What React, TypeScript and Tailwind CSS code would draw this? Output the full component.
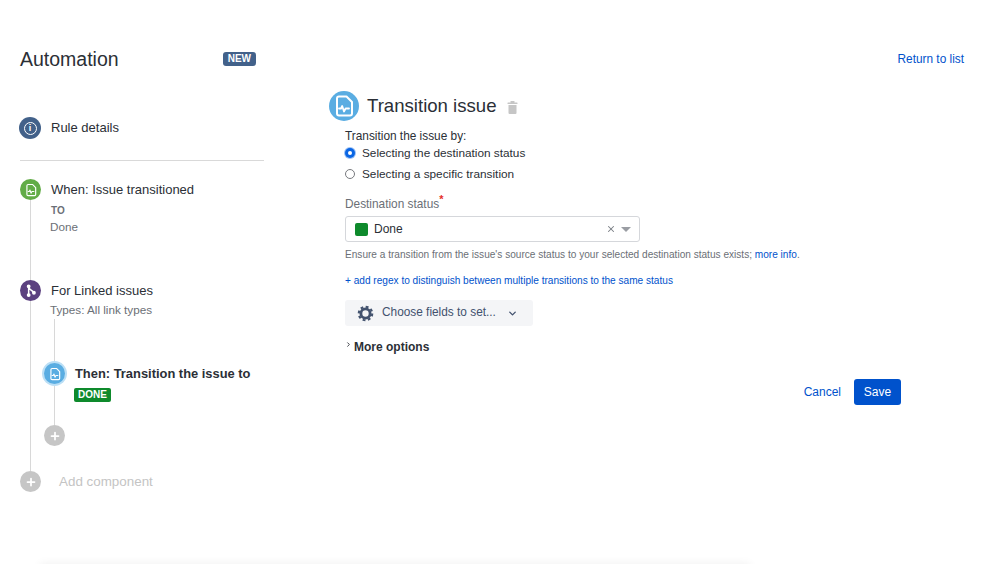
import { ChevronDown, ChevronRight, Plus, X } from 'lucide-react'

function IssueGlyph({ size = 14 }: { size?: number }) {
  return (
    <svg width={size} height={size} viewBox="0 0 24 24" fill="none" stroke="white" strokeWidth="2" strokeLinejoin="round" strokeLinecap="round">
      <path d="M7 2.5h7.5L20 8v11.5a2 2 0 0 1-2 2H7a2 2 0 0 1-2-2v-15a2 2 0 0 1 2-2z" />
      <path d="M7 14.5h2l1.2-2.5 1.8 5.5 1.6-3H17" strokeWidth="1.8" />
    </svg>
  )
}

function StepIcon({ className, children }: { className: string; children: React.ReactNode }) {
  return <div className={`z-10 flex shrink-0 items-center justify-center rounded-full ${className}`}>{children}</div>
}

function AddDot() {
  return (
    <StepIcon className="h-[21px] w-[21px] bg-[#c6c6c6]">
      <Plus size={12} color="white" strokeWidth={3.5} />
    </StepIcon>
  )
}

function GearIcon() {
  return (
    <svg width="17" height="17" viewBox="0 0 24 24" fill="none" stroke="#42526e">
      <circle cx="12" cy="12" r="6.5" strokeWidth="4" />
      <circle cx="12" cy="12" r="9.5" strokeWidth="3" strokeDasharray="4 3.46" />
    </svg>
  )
}

function TrashIcon() {
  return (
    <svg width="11" height="13" viewBox="0 0 11 13" fill="#c6c6c6">
      <rect x="0.5" y="1.5" width="10" height="1.5" rx="0.5" />
      <rect x="3.5" y="0" width="4" height="2" rx="0.5" />
      <path d="M1.5 4h8v8a1 1 0 0 1-1 1h-6a1 1 0 0 1-1-1z" />
    </svg>
  )
}

function Sidebar() {
  return (
    <aside className="relative ml-[20px] w-[244px] shrink-0 pt-[47px]">
      <span className="absolute left-[10px] top-[200px] z-0 h-[271px] w-px bg-[#d8d8d8]" />
      <span className="absolute left-[34px] top-[319px] z-0 h-[106px] w-px bg-[#d8d8d8]" />
      <div className="flex items-center justify-between pr-[8px]">
        <h1 className="text-[19.5px] leading-[24px] text-[#2b2f36]">Automation</h1>
        <span className="rounded-[3px] bg-[#42618a] px-[5px] text-[10px] font-bold leading-[14px] text-white">NEW</span>
      </div>

      <div className="mt-[46px] flex items-center gap-[10px]">
        <StepIcon className="-ml-px h-[22px] w-[22px] bg-[#42618a]">
          <div className="flex h-[13px] w-[13px] items-center justify-center rounded-full border-[1.5px] border-white text-[9px] font-bold leading-none text-white">i</div>
        </StepIcon>
        <span className="text-[13px] leading-[18px] text-[#2b2f36]">Rule details</span>
      </div>

      <div className="mt-[21px] h-px bg-[#d9d9d9]" />

      <div className="mt-[18px] flex items-center gap-[10px]">
        <StepIcon className="h-[21px] w-[21px] bg-[#62ac47]">
          <IssueGlyph size={14} />
        </StepIcon>
        <span className="text-[13px] leading-[18px] text-[#2b2f36]">When: Issue transitioned</span>
      </div>
      <div className="mt-[4px] pl-[31px] text-[10px] font-bold leading-[14px] text-[#6b6f76]">TO</div>
      <div className="mt-[1px] pl-[30px] text-[11.7px] leading-[16px] text-[#6b6f76]">Done</div>

      <div className="mt-[45px] flex items-center gap-[10px]">
        <StepIcon className="h-[21px] w-[21px] bg-[#5c4180]">
          <svg width="14" height="14" viewBox="0 0 24 24" fill="none" stroke="white" strokeWidth="2.6" strokeLinecap="round">
            <path d="M8 4v15M8 5c1 5 5 5 8 9" />
            <circle cx="8" cy="19" r="2" fill="white" />
            <circle cx="8" cy="4" r="2" fill="white" />
            <circle cx="17" cy="15" r="2" fill="white" />
          </svg>
        </StepIcon>
        <span className="text-[13px] leading-[18px] text-[#2b2f36]">For Linked issues</span>
      </div>
      <div className="mt-[1px] pl-[30px] text-[11.7px] leading-[16px] text-[#6b6f76]">Types: All link types</div>

      <div className="mt-[45px] flex items-center gap-[10px] pl-[24px]">
        <StepIcon className="h-[21px] w-[21px] bg-[#5aade2] shadow-[0_0_0_2px_#bcdff5]">
          <IssueGlyph size={14} />
        </StepIcon>
        <span className="text-[12.9px] font-bold leading-[18px] text-[#2b2f36]">Then: Transition the issue to</span>
      </div>
      <div className="mt-[4px] flex pl-[54px]">
        <span className="rounded-[2px] bg-[#0e8a2c] px-[4px] text-[10px] font-bold leading-[14px] text-white">DONE</span>
      </div>

      <div className="mt-[23px] pl-[24px]">
        <AddDot />
      </div>

      <div className="mt-[25px] flex items-center gap-[18px]">
        <AddDot />
        <span className="text-[13.4px] leading-[18px] text-[#c4c4c4]">Add component</span>
      </div>
    </aside>
  )
}

function Radio({ checked, label }: { checked?: boolean; label: string }) {
  return (
    <label className="flex h-[21px] items-center gap-[7px]">
      {checked ? (
        <span className="flex h-[10px] w-[10px] items-center justify-center rounded-full bg-[#0a66e4] shadow-[0_0_0_1px_#9cc1f5]">
          <span className="h-[4px] w-[4px] rounded-full bg-white" />
        </span>
      ) : (
        <span className="h-[10px] w-[10px] rounded-full border border-[#77797e] bg-white" />
      )}
      <span className="text-[11.8px] leading-[16px] text-[#2b2f36]">{label}</span>
    </label>
  )
}

function TransitionForm() {
  return (
    <main className="ml-[65px] flex-1 pt-[90px]">
      <div className="flex items-center gap-[8px]">
        <StepIcon className="h-[30px] w-[30px] bg-[#5aade2]">
          <IssueGlyph size={24} />
        </StepIcon>
        <h2 className="text-[18.6px] leading-[32px] text-[#2b2f36]">Transition issue</h2>
        <span className="ml-[2px] mt-[2px] flex"><TrashIcon /></span>
      </div>

      <div className="ml-[16px] w-[455px]">
        <p className="mt-[6px] text-[11.85px] leading-[16px] text-[#2b2f36]">Transition the issue by:</p>
        <div className="-mt-[2px]">
          <Radio checked label="Selecting the destination status" />
          <Radio label="Selecting a specific transition" />
        </div>

        <p className="mt-[12px] text-[11.85px] leading-[16px] text-[#6b6f76]">
          Destination status<sup className="text-[11px] font-bold leading-none text-[#e5302a]">*</sup>
        </p>
        <div className="mt-[4px] flex h-[26px] w-[295px] items-center rounded-[3px] border border-[#d5d7db] bg-white pl-[9px] pr-[8px]">
          <span className="h-[13px] w-[13px] rounded-[2px] bg-[#0e8a2c]" />
          <span className="ml-[6px] flex-1 text-[12px] leading-[16px] text-[#2b2f36]">Done</span>
          <X size={10} color="#7a7e85" strokeWidth={2.5} />
          <span className="ml-[5px] h-0 w-0 border-x-[5px] border-t-[5px] border-x-transparent border-t-[#9a9da3]" />
        </div>
      </div>

      <div className="ml-[16px]">
        <p className="mt-[6px] text-[10.1px] leading-[14px] text-[#6b6f76]">
          Ensure a transition from the issue's source status to your selected destination status exists; <span className="text-[#0052cc]">more info</span>.
        </p>
        <p className="mt-[12px] text-[10.1px] leading-[14px] text-[#0052cc]">+ add regex to distinguish between multiple transitions to the same status</p>
        <button type="button" className="mt-[12px] flex h-[26px] w-[188px] items-center rounded-[3px] bg-[#f4f5f7] pl-[12px] text-[11.85px] text-[#42526e]">
          <GearIcon />
          <span className="ml-[8px]">Choose fields to set...</span>
          <ChevronDown size={11} strokeWidth={3} className="ml-[11px]" />
        </button>
        <div className="mt-[13px] flex items-start">
          <ChevronRight size={7} color="#2b2f36" strokeWidth={3} className="mt-[2px]" />
          <span className="ml-[2px] text-[12px] font-bold leading-[16px] text-[#2b2f36]">More options</span>
        </div>
      </div>

      <div className="ml-[16px] mt-[24px] flex w-[556px] items-center justify-end gap-[13px]">
        <span className="text-[12px] text-[#0052cc]">Cancel</span>
        <button type="button" className="h-[26px] w-[47px] rounded-[3px] bg-[#0052cc] text-[12px] text-white">Save</button>
      </div>
    </main>
  )
}

export default function App() {
  return (
    <div className="relative flex h-[564px] w-[999px] overflow-hidden bg-white font-['Liberation_Sans',Arial,sans-serif]">
      <Sidebar />
      <TransitionForm />
      <a className="absolute right-[35px] top-[52px] text-[11.85px] leading-[14px] text-[#0052cc]">Return to list</a>
      <div className="absolute bottom-[-8px] left-[40px] h-[8px] w-[710px] shadow-[0_0_10px_rgba(0,0,0,0.07)]" />
    </div>
  )
}
